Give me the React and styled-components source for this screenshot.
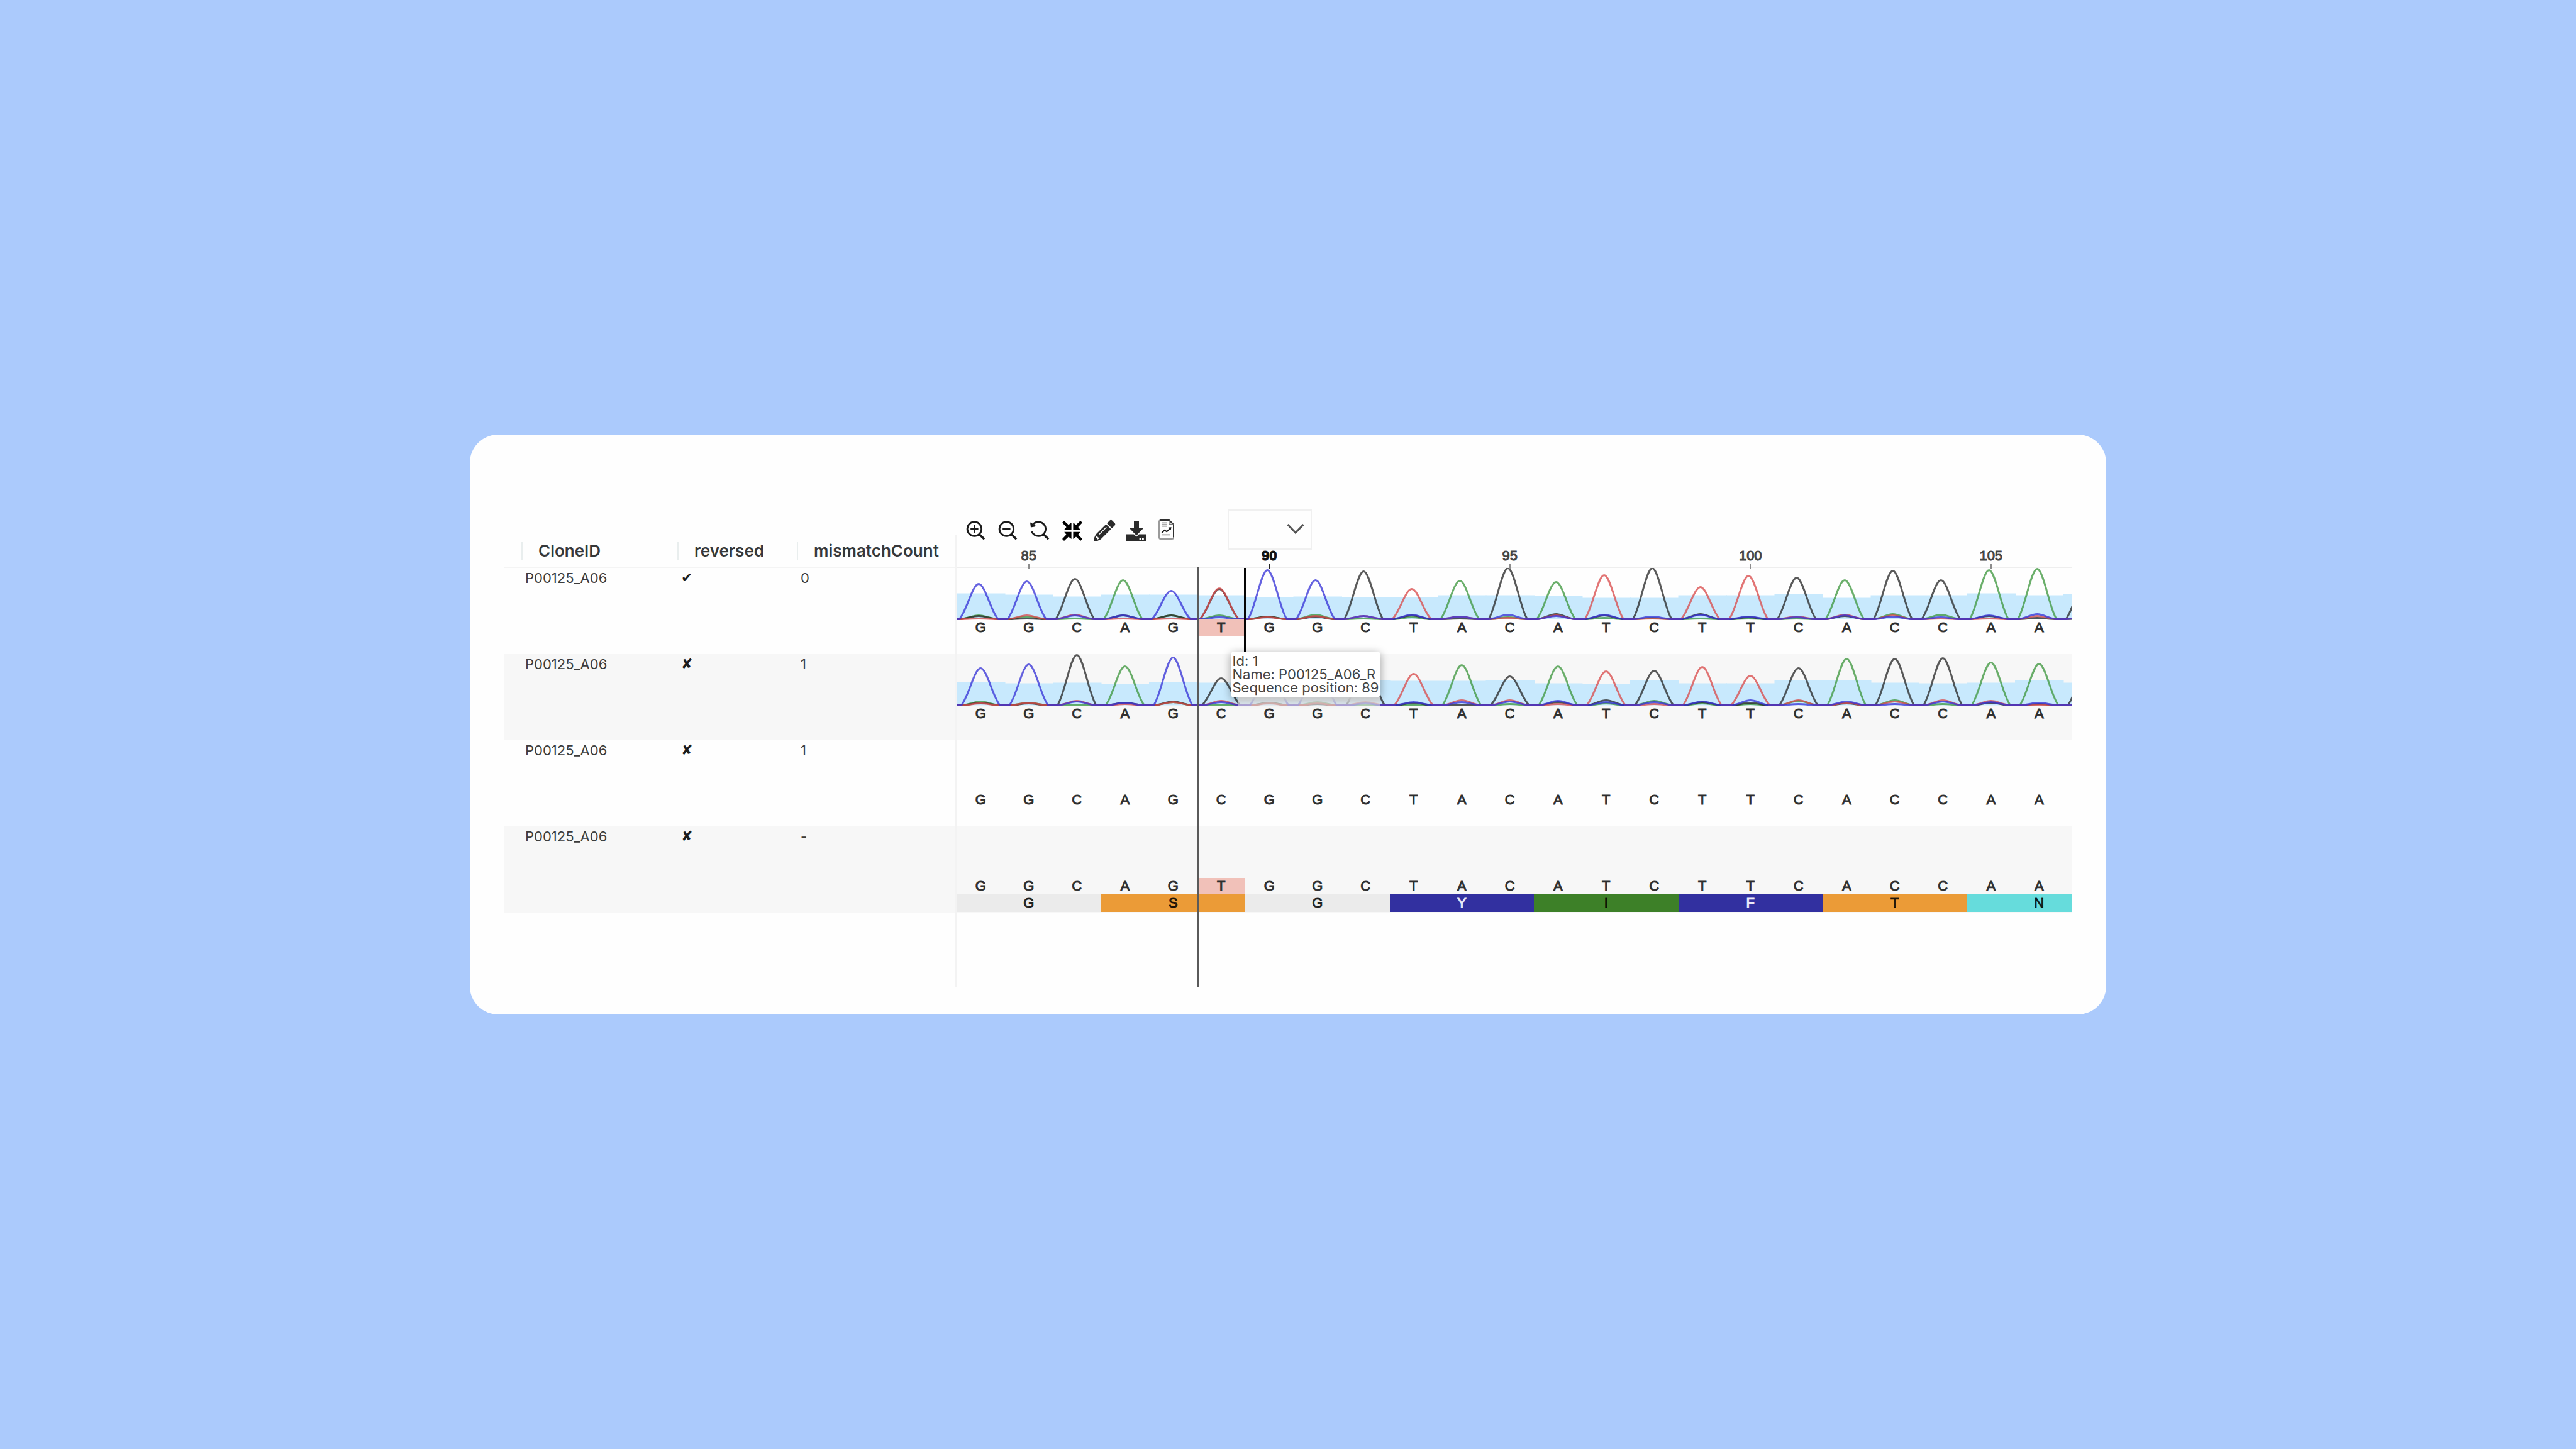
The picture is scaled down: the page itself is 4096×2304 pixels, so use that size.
import styled, { createGlobalStyle, css } from 'styled-components';

const GlobalStyle = createGlobalStyle`
    * {
        box-sizing: border-box;
    }
    body {
        margin: 0;
        background: #abcafc;
    }
`;

// one base column is 153 units wide, the last column is cut by the edge of the viewport
const COLUMN = 153;
const LAST_COLUMN = 27;
const BASES = 23;
const VIEW_WIDTH = BASES * COLUMN + LAST_COLUMN;
const PLOT_HEIGHT = 84;
const BASELINE = 81.5;

const baseColumns = css`
    display: grid;
    grid-template-columns: repeat(${BASES}, minmax(0, ${COLUMN}fr)) minmax(0, ${LAST_COLUMN}fr);
`;

const heavier = css`
    font-family: "Liberation Sans", Arial, sans-serif;
    font-size: 22px;
    -webkit-text-stroke: 1px currentColor;
`;

const Page = styled.main`
    min-height: 100vh;
    padding: 48px;
    display: flex;
    align-items: center;
    justify-content: center;
    font-family: Inter, "Open Sans", sans-serif;
    color: #3c3c3c;
`;

const Card = styled.section`
    width: 100%;
    max-width: 2602px;
    padding: 119px 55px 43px;
    display: flex;
    align-items: stretch;
    background: #fefefe;
    border-radius: 45px;
`;

/* left side */

const CloneList = styled.div`
    flex: 0 0 719px;
    margin-top: 41px;
    border-right: 2px solid #f3f3f3;
`;

const CloneTable = styled.table`
    width: 100%;
    table-layout: fixed;
    border-spacing: 0;
    text-align: left;
`;

const Col = styled.col`
    width: ${props => props.$width};
`;

const HeadCell = styled.th`
    padding: 11px 0;
    border-bottom: 2px solid #f4f4f4;
    font-size: 26px;
    line-height: 28px;
    font-weight: 600;
    color: #36383a;
`;

const HeadLabel = styled.span`
    display: block;
    padding-left: 25px;
    border-left: 2px solid #e9eeee;
`;

const Row = styled.tr`
    height: 137px;

    &:nth-child(even) {
        background: #f7f7f7;
    }
`;

const Cell = styled.td`
    padding: 1px 0 0 6px;
    vertical-align: top;
    font-size: 22px;
    line-height: 30px;
`;

const Mark = styled.span`
    display: block;
    font-family: "DejaVu Sans", sans-serif;
    font-size: 22px;
    line-height: 30px;
    color: #1c1c1c;
`;

/* toolbar */

const Viewer = styled.div`
    flex: 1;
    min-width: 0;
`;

const Toolbar = styled.div`
    height: 64px;
    padding-left: 15px;
    display: flex;
    align-items: center;
`;

const Tools = styled.div`
    display: flex;
    align-items: flex-start;
    gap: 19px;
    height: 36px;
`;

const IconButton = styled.button`
    width: ${props => props.$raised ? '26px' : '32px'};
    height: 36px;
    padding: ${props => props.$raised ? '0' : '4px 0 0'};
    border: 0;
    background: none;
    cursor: pointer;

    svg {
        display: block;
        overflow: visible;
    }
`;

const Picker = styled.div`
    position: relative;
    width: 134px;
    height: 64px;
    margin-left: 84px;

    svg {
        position: absolute;
        top: 22px;
        right: 12px;
        pointer-events: none;
    }
`;

const Select = styled.select`
    width: 100%;
    height: 100%;
    appearance: none;
    background: transparent;
    border: 2px solid #f0f0f0;
`;

/* tracks */

const Axis = styled.div`
    ${baseColumns}
    height: 29px;
    border-bottom: 2px solid #eeeeee;
`;

const AxisLabel = styled.span`
    ${heavier}
    position: relative;
    grid-column: ${props => props.$column};
    line-height: 20px;
    text-align: center;
    font-weight: ${props => props.$current ? 700 : 400};
    color: ${props => props.$current ? '#111111' : '#444444'};

    &::after {
        content: '';
        position: absolute;
        z-index: 1;
        top: 22px;
        left: 50%;
        width: 2px;
        height: 9px;
        margin-left: -1px;
        background: ${props => props.$current ? '#222222' : '#8c8c8c'};
    }
`;

const Tracks = styled.div`
    position: relative;
    padding-bottom: 119px;
`;

const Track = styled.div`
    height: 137px;
    background: ${props => props.$shaded ? '#f7f7f7' : 'transparent'};
`;

const PlotArea = styled.div`
    height: 82px;

    svg {
        display: block;
        width: 100%;
        height: ${PLOT_HEIGHT}px;
    }
`;

const Sequence = styled.div`
    ${baseColumns}
    ${heavier}
    position: relative;
    height: 26px;
    line-height: 26px;
    text-align: center;
    color: #2e2e2e;
`;

const Base = styled.span`
    background: ${props => props.$mismatch ? '#f1c1b9' : 'transparent'};
`;

const AminoAcids = styled(Sequence)`
    height: 28px;
    line-height: 28px;
`;

const aminoColors = {
    G: '#ebebeb',
    S: '#eb9b37',
    T: '#eb9b37',
    Y: '#3230a0',
    F: '#3230a0',
    I: '#3d8028',
    N: '#66dcdc',
};

const AminoAcid = styled.span`
    grid-column: span 3;
    display: grid;
    grid-template-columns: subgrid;
    background: ${props => aminoColors[props.$code]};
    color: ${props => 'YF'.includes(props.$code) ? '#ececfa' : 'rgba(0, 0, 0, .8)'};

    span {
        grid-column: 2;
    }
`;

/* things floating over the tracks */

const Overlay = styled.div`
    ${baseColumns}
    position: absolute;
    inset: 0;
    pointer-events: none;
`;

const Cursor = styled.i`
    grid-area: 1 / 6;
    width: 3px;
    margin-top: -2px;
    background: #5a5a5a;
`;

const Caret = styled.i`
    grid-area: 1 / 6;
    justify-self: end;
    width: 4px;
    height: 134px;
    margin-right: -2px;
    background: #050505;
`;

const Tooltip = styled.div`
    position: relative;
    grid-area: 1 / 6;
    justify-self: start;
    align-self: start;
    width: max-content;
    margin: 133px 0 0 53px;
    padding: 5px 3px;
    border-radius: 5px;
    background: #ffffff;
    box-shadow: 0 3px 14px rgba(0, 0, 0, .36);
    font-size: 22px;
    line-height: 21px;
    color: #444444;

    &::after {
        content: '';
        position: absolute;
        top: 100%;
        left: 12px;
        right: 0;
        height: 15px;
        background: linear-gradient(rgba(204, 204, 204, .95), rgba(247, 247, 247, .5));
    }
`;

const clones = [
    { id: 'P00125_A06', reversed: true, mismatches: '0' },
    { id: 'P00125_A06', reversed: false, mismatches: '1' },
    { id: 'P00125_A06', reversed: false, mismatches: '1' },
    { id: 'P00125_A06', reversed: false, mismatches: '-' },
];

const ticks = [85, 90, 95, 100, 105];

// quality, then signal height in the G, A, C and T channels
const forwardRead = [
    [41, 56, 6, 5, 1], [39, 60, 4, 1, 6], [36, 6, 1, 64, 7], [39, 6, 62, 6, 1], [39, 45, 6, 6, 1],
    [38, 3, 6, 48, 49], [35, 78, 4, 4, 3], [36, 62, 7, 4, 5], [35, 5, 1, 76, 5], [35, 7, 3, 6, 48],
    [38, 4, 61, 1, 4], [38, 7, 3, 81, 2], [37, 5, 59, 8, 6], [34, 7, 2, 6, 70], [34, 4, 2, 81, 1],
    [38, 7, 1, 8, 51], [38, 4, 1, 3, 69], [40, 3, 1, 66, 4], [34, 6, 62, 5, 7], [38, 4, 8, 77, 6],
    [38, 3, 7, 62, 1], [41, 6, 78, 5, 1], [38, 8, 80, 2, 5], [40, 3, 1, 62, 3],
];

const reverseRead = [
    [37, 59, 6, 4, 3], [35, 65, 4, 3, 4], [36, 6, 1, 80, 7], [34, 4, 62, 4, 2], [37, 76, 5, 6, 5],
    [36, 5, 1, 43, 7], [36, 60, 4, 4, 3], [36, 62, 5, 2, 3], [40, 3, 1, 64, 5], [39, 5, 1, 4, 50],
    [39, 5, 64, 1, 8], [40, 6, 2, 46, 8], [35, 7, 62, 5, 2], [34, 5, 3, 8, 54], [40, 5, 7, 55, 2],
    [35, 6, 3, 5, 61], [35, 8, 2, 4, 47], [40, 2, 7, 59, 8], [40, 6, 74, 3, 4], [36, 2, 8, 74, 6],
    [35, 6, 2, 75, 8], [36, 5, 68, 4, 7], [40, 4, 66, 2, 1], [36, 3, 1, 62, 3],
];

const reads = [
    { sequence: 'GGCAGTGGCTACATCTTCACCAA', signal: forwardRead, shift: -3, mismatch: 5 },
    { sequence: 'GGCAGCGGCTACATCTTCACCAA', signal: reverseRead, shift: 0 },
    { sequence: 'GGCAGCGGCTACATCTTCACCAA' },
    { sequence: 'GGCAGTGGCTACATCTTCACCAA', mismatch: 5, aminoAcids: 'GSGYIFTN' },
];

const channels = [
    { name: 'A', index: 2, color: '#3d963d' },
    { name: 'C', index: 3, color: '#262626' },
    { name: 'T', index: 4, color: '#d94a4a' },
    { name: 'G', index: 1, color: '#3430d6' },
];

const tracePath = (signal, index, shift) => {
    const step = COLUMN / 2;
    return signal.reduce((path, values, i) => {
        const x = step * i + step / 2 + shift;
        const height = values[index];
        const top = BASELINE - height;
        const foot = BASELINE - height * (height > 20 ? .18 : .05);
        return path
            + ` L${x - 31} ${BASELINE} C${x - 20} ${foot} ${x - 10} ${top} ${x} ${top}`
            + ` C${x + 10} ${top} ${x + 20} ${foot} ${x + 31} ${BASELINE}`;
    }, `M-10 ${BASELINE}`);
};

const Chromatogram = ({ signal, shift }) => (
    <svg viewBox={`0 0 ${VIEW_WIDTH / 2} ${PLOT_HEIGHT}`} preserveAspectRatio="none" aria-hidden="true">
        {signal.map(([quality], i) => (
            <rect key={i} x={i * COLUMN / 2} y={BASELINE - quality} width={COLUMN / 2 + 1} height={quality} fill="#c8e9fd" />
        ))}
        {channels.map(({ name, index, color }) => (
            <path
                key={name}
                d={tracePath(signal, index, shift)}
                fill="none"
                stroke={color}
                strokeOpacity=".76"
                strokeWidth="3"
                strokeLinejoin="round"
            />
        ))}
    </svg>
);

const Magnifier = ({ children }) => (
    <svg width="32" height="32" viewBox="0 0 32 32" fill="none" stroke="#1a1a1a" strokeWidth="2.8">
        {children}
        <path d="M21 21.6L29.2 29.2" strokeWidth="3.4" />
    </svg>
);

const ZoomInIcon = () => (
    <Magnifier>
        <circle cx="13.4" cy="13" r="11.3" />
        <path d="M7.2 13H19.6M13.4 6.8V19.2" strokeWidth="2.6" />
    </Magnifier>
);

const ZoomOutIcon = () => (
    <Magnifier>
        <circle cx="13.4" cy="13" r="11.3" />
        <path d="M7.2 13H19.6" strokeWidth="3" />
    </Magnifier>
);

const ResetIcon = () => (
    <Magnifier>
        <path d="M2.7 17A11.3 11.3 0 1 0 5 5.4" />
        <path d="M0 2.4L8.6 7L7 9.6L1 10.6Z" fill="#1a1a1a" stroke="none" />
    </Magnifier>
);

const arrow = 'M0 3L3 0L10 6.6L14.6 3V14.2H3.2L6.6 10Z';

const FitIcon = () => (
    <svg width="32" height="32" viewBox="0 0 32 32" fill="#000000">
        <path d={arrow} />
        <path d={arrow} transform="translate(32 0) scale(-1 1)" />
        <path d={arrow} transform="translate(0 32) scale(1 -1)" />
        <path d={arrow} transform="translate(32 32) scale(-1 -1)" />
    </svg>
);

const PencilIcon = () => (
    <svg width="32" height="32" viewBox="0 0 32 32" fill="#2b2b2b">
        <g transform="translate(0 32) rotate(-45)">
            <path d="M0 0L3 -3.4L9 -5.6H32V5.6H9L3 3.4Z" />
            <path d="M34 -5.6H40Q43 -5.6 43 -2.6V2.6Q43 5.6 40 5.6H34Z" />
            <path d="M5 -2L9 -3L8 0L9 3L5 2L6 0Z" fill="#ffffff" />
            <path d="M13 -1.8H29" stroke="#ffffff" strokeWidth="1.4" />
        </g>
    </svg>
);

const DownloadIcon = () => (
    <svg width="32" height="32" viewBox="0 0 32 32" fill="#2b2b2b">
        <path d="M0 21.5H32V32H0Z" />
        <path d="M12 0H20V12H27L16 23.4L5 12H12Z" stroke="#ffffff" strokeWidth="3" />
        <path d="M12 0H20V12H27L16 23.4L5 12H12Z" />
        <path d="M20.6 28H23.4V30.4H20.6ZM25 28H27.8V30.4H25Z" fill="#ffffff" />
    </svg>
);

const ReportIcon = () => (
    <svg width="26" height="32" viewBox="0 0 26 32" fill="none">
        <path d="M17 1H3.5Q1 1 1 3.5V28.5Q1 31 3.5 31H21.5Q24 31 24 28.5" stroke="#9a9a9a" strokeWidth="2" />
        <path d="M2.5 1H17L24 8V28.5" stroke="#303030" strokeWidth="2" />
        <path d="M17 1.5V7.5H23.5" stroke="#777777" strokeWidth="1.4" />
        <path d="M5.5 5.4H13M5.5 8H13M5.5 10.6H13" stroke="#8a8a8a" strokeWidth="1.6" />
        <path d="M5.4 21.2L9.6 17L13.2 19.2L19 14" stroke="#1c1c1c" strokeWidth="2" />
        <path d="M15.6 12.6L20.6 12.2L19.6 17Z" fill="#1c1c1c" />
        <path d="M5.5 24.2H18.5M5.5 26.4H18.5" stroke="#8a8a8a" strokeWidth="1.2" />
    </svg>
);

const tools = [
    { label: 'Zoom in', Icon: ZoomInIcon },
    { label: 'Zoom out', Icon: ZoomOutIcon },
    { label: 'Reset zoom', Icon: ResetIcon },
    { label: 'Fit to window', Icon: FitIcon },
    { label: 'Edit', Icon: PencilIcon },
    { label: 'Download', Icon: DownloadIcon },
    { label: 'Report', Icon: ReportIcon, raised: true },
];

const Clones = () => (
    <CloneList>
        <CloneTable>
            <colgroup>
                <Col $width="27px" />
                <Col $width="248px" />
                <Col $width="190px" />
                <Col $width="auto" />
            </colgroup>
            <thead>
                <tr>
                    <HeadCell as="td" />
                    <HeadCell scope="col"><HeadLabel>CloneID</HeadLabel></HeadCell>
                    <HeadCell scope="col"><HeadLabel>reversed</HeadLabel></HeadCell>
                    <HeadCell scope="col"><HeadLabel>mismatchCount</HeadLabel></HeadCell>
                </tr>
            </thead>
            <tbody>
                {clones.map((clone, i) => (
                    <Row key={i}>
                        <Cell />
                        <Cell>{clone.id}</Cell>
                        <Cell><Mark>{clone.reversed ? '✔' : '✘'}</Mark></Cell>
                        <Cell>{clone.mismatches}</Cell>
                    </Row>
                ))}
            </tbody>
        </CloneTable>
    </CloneList>
);

const Read = ({ read, shaded }) => (
    <Track $shaded={shaded}>
        <PlotArea>
            {read.signal && <Chromatogram signal={read.signal} shift={read.shift} />}
        </PlotArea>
        <Sequence>
            {[...read.sequence].map((base, i) => (
                <Base key={i} $mismatch={i === read.mismatch}>{base}</Base>
            ))}
        </Sequence>
        {read.aminoAcids && (
            <AminoAcids>
                {[...read.aminoAcids].map((code, i) => (
                    <AminoAcid key={i} $code={code}><span>{code}</span></AminoAcid>
                ))}
            </AminoAcids>
        )}
    </Track>
);

export default function App() {
    return (
        <>
            <GlobalStyle />
            <Page>
                <Card>
                    <Clones />
                    <Viewer>
                        <Toolbar>
                            <Tools>
                                {tools.map(({ label, Icon, raised }) => (
                                    <IconButton key={label} type="button" aria-label={label} $raised={raised}>
                                        <Icon />
                                    </IconButton>
                                ))}
                            </Tools>
                            <Picker>
                                <Select aria-label="Sequence">
                                    <option value="" />
                                </Select>
                                <svg width="28" height="18" viewBox="0 0 28 18" fill="none" stroke="#555555" strokeWidth="3">
                                    <path d="M1.5 2L14 15L26.5 2" />
                                </svg>
                            </Picker>
                        </Toolbar>
                        <Axis>
                            {ticks.map(tick => (
                                <AxisLabel key={tick} $column={tick - 83} $current={tick === 90}>{tick}</AxisLabel>
                            ))}
                        </Axis>
                        <Tracks>
                            {reads.map((read, i) => (
                                <Read key={i} read={read} shaded={i % 2 === 1} />
                            ))}
                            <Overlay>
                                <Cursor />
                                <Caret />
                                <Tooltip role="tooltip">
                                    <div>Id: 1</div>
                                    <div>Name: P00125_A06_R</div>
                                    <div>Sequence position: 89</div>
                                </Tooltip>
                            </Overlay>
                        </Tracks>
                    </Viewer>
                </Card>
            </Page>
        </>
    );
}
